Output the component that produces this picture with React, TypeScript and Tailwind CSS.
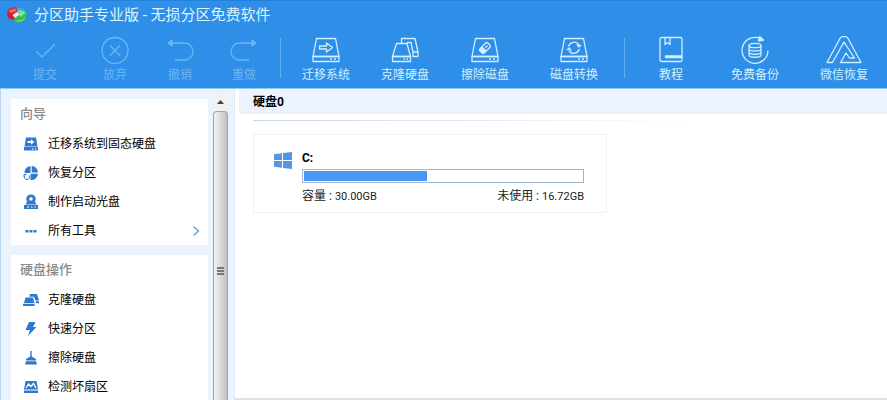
import type { ReactNode } from "react";

type Tool = {
  label: string;
  icon: ReactNode;
  className?: string;
};

function ToolIcon({ wide, children }: { wide?: boolean; children: ReactNode }) {
  return (
    <svg
      viewBox={wide ? "0 0 36 28" : "0 0 28 28"}
      className={wide ? "h-7 w-9" : "h-7 w-7"}
      fill="none"
      stroke="currentColor"
      strokeWidth="1.3"
      strokeLinejoin="round"
      aria-hidden="true"
    >
      {children}
    </svg>
  );
}

function DriveIcon({ children }: { children: ReactNode }) {
  return (
    <ToolIcon>
      <path d="M4.5 2.5h19L27 20.5H1z" />
      <path d="M1 20.5h26v5H1z" />
      <path d="M18 23h2M22 23h2" strokeWidth="1.6" />
      {children}
    </ToolIcon>
  );
}

const historyTools: Tool[] = [
  {
    label: "提交",
    icon: (
      <ToolIcon>
        <path d="m5 15 6 6L24 8" />
      </ToolIcon>
    ),
  },
  {
    label: "放弃",
    className: "ml-3.5",
    icon: (
      <ToolIcon>
        <circle cx="14" cy="14.5" r="13" />
        <path d="m9 9.5 10 10M19 9.5l-10 10" />
      </ToolIcon>
    ),
  },
  {
    label: "撤销",
    className: "ml-[9px]",
    icon: (
      <ToolIcon>
        <path d="M5 7h13.500a8.500 8.500 0 0 1 0 17H9" />
        <path d="M2 7l4-3v6z" fill="currentColor" />
      </ToolIcon>
    ),
  },
  {
    label: "重做",
    className: "ml-2",
    icon: (
      <ToolIcon>
        <path d="M23 7H9.500a8.500 8.500 0 0 0 0 17H19" />
        <path d="M26 7l-4-3v6z" fill="currentColor" />
      </ToolIcon>
    ),
  },
];

const diskTools: Tool[] = [
  {
    label: "迁移系统",
    icon: (
      <DriveIcon>
        <path d="M7.500 10h7V7l6 4.500-6 4.500v-3h-7z" />
      </DriveIcon>
    ),
  },
  {
    label: "克隆硬盘",
    className: "ml-[15px]",
    icon: (
      <ToolIcon>
        <path d="M5.500 7.500H16l3.500 13h-18z" />
        <path d="M1.500 20.500h18v5h-18z" />
        <path d="M12.500 23H14M15.500 23H17" strokeWidth="1.600" />
        <path d="M10.500 7V2.500h13.500l3 13.500v4.500h-5V16h5M22 16l-2-9.500h-4" />
      </ToolIcon>
    ),
  },
  {
    label: "擦除磁盘",
    className: "ml-4",
    icon: (
      <DriveIcon>
        <g transform="rotate(-45 14 12)">
          <rect x="8.500" y="9" width="11" height="6" rx="1.500" />
          <path d="M8.500 9.500h4v5h-4z" fill="currentColor" />
          <path d="M14.500 12h3" />
        </g>
      </DriveIcon>
    ),
  },
  {
    label: "磁盘转换",
    className: "ml-[25px]",
    icon: (
      <DriveIcon>
        <path d="M8.500 10.500a6 6 0 0 1 10.500-2M19.500 13a6 6 0 0 1-10.500 2" />
        <path d="M21.500 9.500l-3 2-2-3zM6.500 13.500l3-2 2 3z" fill="currentColor" strokeWidth="0.500" />
      </DriveIcon>
    ),
  },
];

const helpTools: Tool[] = [
  {
    label: "教程",
    icon: (
      <ToolIcon>
        <path d="M25 20V3q0-1.500-1.500-1.500h-19Q3 1.500 3 3v20.500Q3 25.500 5 25.500h18.500q1.500 0 1.500-1.500v-4H8.500v1.500H25" />
        <path d="M8 1.500v7l2.500-2 2.500 2v-7" />
      </ToolIcon>
    ),
  },
  {
    label: "免费备份",
    className: "ml-5",
    icon: (
      <ToolIcon>
        <path d="M27 14.500A13 13 0 1 1 18 2" />
        <path d="M18.500.500l4 3.500-5 1z" fill="currentColor" />
        <ellipse cx="14" cy="9.500" rx="6" ry="2.200" />
        <path d="M8 9.500v9.500c0 3 12 3 12 0V9.500M8 12.700c0 3 12 3 12 0M8 16c0 3 12 3 12 0" />
      </ToolIcon>
    ),
  },
  {
    label: "微信恢复",
    className: "ml-[25px]",
    icon: (
      <ToolIcon wide>
        <path d="M1 26.500 14.500 1.500 16 .700h4l1.500.800L35 26.500H14.500l5.500-9.500 3.500 5h5L18 6 6.500 26.500z" />
      </ToolIcon>
    ),
  },
];

function ToolGroup({ tools, itemClass, disabled }: { tools: Tool[]; itemClass: string; disabled?: boolean }) {
  return (
    <div className="flex">
      {tools.map((tool) => (
        <button
          key={tool.label}
          type="button"
          disabled={disabled}
          className={`flex shrink-0 flex-col items-center gap-[3px] text-xs leading-4 ${itemClass} ${tool.className ?? ""}`}
        >
          {tool.icon}
          <span className="whitespace-nowrap">{tool.label}</span>
        </button>
      ))}
    </div>
  );
}

function Divider() {
  return <div className="mt-0.5 h-10 w-px shrink-0 bg-[#62aff0]" />;
}

function Logo() {
  return (
    <svg viewBox="0 0 20 16" className="h-4 w-5" aria-hidden="true">
      <path d="M10 1C5-.5 0 2 0 6.500 0 10.500 3 13 7 12.500l3-3.500z" fill="#cf1f2b" />
      <path d="M1.500 5C3 1.500 7 1 9.500 2L9 4.500 4 6z" fill="#ee5f5a" />
      <path d="M10 1c4-1 8 1 9 4.500L13 9l-3-2z" fill="#35aee0" />
      <path d="M19 5c2 5-2 10.500-8 10.500-2.500 0-4.500-1-4.500-3L11 9z" fill="#35bf4c" />
      <path d="M11 4c3-1 6 0 7.500 2L13 10z" fill="#7fe39a" />
      <path d="M9 13.500c4 1 8-.5 9.500-4-.5 3.500-4.500 5.500-8 5z" fill="#a5ee7c" />
      <path d="M5.500 8 10 5l2.500 2.500L8 11z" fill="#e8f3f8" />
    </svg>
  );
}

function SideIcon({ children }: { children: ReactNode }) {
  return (
    <svg viewBox="0 0 16 16" className="h-4 w-4 shrink-0 text-[#2f78d0]" fill="currentColor" aria-hidden="true">
      {children}
    </svg>
  );
}

type SideItem = { label: string; icon: ReactNode; more?: boolean };

const wizardItems: SideItem[] = [
  {
    label: "迁移系统到固态硬盘",
    icon: (
      <SideIcon>
        <path d="M3 1.500h10l1.500 9h-13z" />
        <path d="M1 11h14v3.500H1z" />
        <path d="M4.500 5H8V3.200L11.500 6 8 8.800V7H4.500z" fill="#fff" />
        <path d="M9 12.500h1.500v1H9zM12 12.500h1.500v1H12z" fill="#fff" />
      </SideIcon>
    ),
  },
  {
    label: "恢复分区",
    icon: (
      <SideIcon>
        <path d="M7.500 1v7H1.500A6.500 6.500 0 0 1 7.500 1zM8.700 1A6.500 6.500 0 0 1 15 7.500H8.700zM15 8.700a6.500 6.500 0 0 1-7.500 6.300V8.700z" />
        <path d="M2 10.500a2.500 2.500 0 1 0 4 0M1 12v-2.500h2.500" fill="none" stroke="currentColor" />
      </SideIcon>
    ),
  },
  {
    label: "制作启动光盘",
    icon: (
      <SideIcon>
        <path d="M8 .5a4.500 4.500 0 0 1 4 7l1.500 3h-11L4 7.500a4.500 4.500 0 0 1 4-7z" />
        <circle cx="8" cy="5" r="1.800" fill="#fff" />
        <path d="M1 11h14v4H1z" />
        <path d="M4 12.500h2v1H4zM8 12.500h1.500v1H8zM11.500 12.500H13v1h-1.500z" fill="#fff" />
      </SideIcon>
    ),
  },
  {
    label: "所有工具",
    more: true,
    icon: (
      <SideIcon>
        <path d="M2.500 7h3v2.500h-3zM6.500 7h3v2.500h-3zM10.500 7h3v2.500h-3z" />
      </SideIcon>
    ),
  },
];

const diskItems: SideItem[] = [
  {
    label: "克隆硬盘",
    icon: (
      <SideIcon>
        <path d="M7 2h7l2 6.500h-3.500L11 4.800H6.300zM2.500 5.500H10l1.500 5.500H1zM0 11.700h11.500V14H0zM12.800 9.200H16v2h-3.200z" />
      </SideIcon>
    ),
  },
  {
    label: "快速分区",
    icon: (
      <SideIcon>
        <path d="M6 1h6.500L10 6h3.500L5 15l2-6H2.500z" />
      </SideIcon>
    ),
  },
  {
    label: "擦除硬盘",
    icon: (
      <SideIcon>
        <path d="M7.300 1h1.400v5.500L13 9v1.500H3V9l4.300-2.500z" />
        <path d="M3 11.200h10l1 3.300H2z" />
      </SideIcon>
    ),
  },
  {
    label: "检测坏扇区",
    icon: (
      <SideIcon>
        <path d="M2.500 2h11L15 10.500H1z" />
        <path d="M1 11.500h14V14H1z" />
        <path d="M3 9l2.500-4L8 7.500l2.500-3L13 9" fill="none" stroke="#fff" strokeWidth="1.300" />
      </SideIcon>
    ),
  },
];

function SidePanel({ title, items, className }: { title: string; items: SideItem[]; className?: string }) {
  return (
    <section className={`bg-white ${className ?? ""}`}>
      <h2 className="flex h-[30px] items-center pl-[9px] text-[13px] font-medium text-[#8b8b8b]">{title}</h2>
      <ul>
        {items.map((item) => (
          <li key={item.label}>
            <button type="button" className="flex h-[29px] w-full items-center pr-2 pl-3 text-xs text-black">
              {item.icon}
              <span className="ml-[9px]">{item.label}</span>
              {item.more && (
                <svg viewBox="0 0 8 12" className="ml-auto h-3 w-2" fill="none" stroke="#4aa0dc" strokeWidth="1.200" aria-hidden="true">
                  <path d="m1.500 1.500 5 4.500-5 4.500" />
                </svg>
              )}
            </button>
          </li>
        ))}
      </ul>
    </section>
  );
}

function Scrollbar() {
  return (
    <div className="flex w-[15px] shrink-0 flex-col bg-[#f1f1f4]">
      <button type="button" aria-label="向上滚动" className="flex h-[22px] items-center justify-center">
        <svg viewBox="0 0 7 4" className="mt-1 h-1 w-[7px]" aria-hidden="true">
          <path d="M3.500 0 7 4H0z" fill="#444" />
        </svg>
      </button>
      <div className="flex flex-1 items-center justify-center rounded-t-sm border-x border-t border-[#a3a3aa] bg-linear-to-r from-[#f3f3f5] to-[#bfbfc6] pt-[30px]">
        <div className="flex w-[7px] flex-col gap-px">
          <span className="h-0.5 bg-[#77777d]" />
          <span className="h-0.5 bg-[#77777d]" />
          <span className="h-0.5 bg-[#77777d]" />
        </div>
      </div>
    </div>
  );
}

function WindowsIcon() {
  return (
    <svg viewBox="0 0 18 17" className="mt-[17px] h-[17px] w-[18px] shrink-0" fill="#5596e0" aria-hidden="true">
      <path d="M0 2.300 8 1.200V8H0zM9 1 18 0v8H9zM0 9h8v6.800L0 14.700zM9 9h9v8l-9-1z" />
    </svg>
  );
}

function Volume({ name, total, free }: { name: string; total: number; free: number }) {
  const used = ((total - free) / total) * 100;

  return (
    <article className="mt-[13px] ml-[14px] flex h-[79px] max-w-[354px] border border-[#f0f1f3] pr-[22px] pl-5">
      <WindowsIcon />
      <div className="ml-2.5 flex-1 pt-[15px]">
        <h3 className="text-xs leading-4 font-bold text-black">{name}</h3>
        <div
          role="progressbar"
          aria-label={name}
          aria-valuenow={Math.round(used)}
          className="mt-[3px] h-3.5 border border-[#a3b7d4] bg-white p-px"
        >
          <div className="h-full bg-[#4797f5]" style={{ width: `${used}%` }} />
        </div>
        <div className="mt-[5px] flex justify-between text-xs leading-4 text-[#222]">
          <p>
            容量 : <span className="text-[11px]">{total.toFixed(2)}GB</span>
          </p>
          <p>
            未使用 : <span className="text-[11px]">{free.toFixed(2)}GB</span>
          </p>
        </div>
      </div>
    </article>
  );
}

export default function App() {
  return (
    <div className="flex h-screen flex-col overflow-hidden bg-white font-[Roboto,'Noto_Sans_CJK_SC',sans-serif]">
      <header className="h-[89px] shrink-0 border-t border-b border-t-[#2482dc] border-b-[#8accf5] bg-[#2e8ee8]">
        <div className="flex h-7 items-center gap-[7px] pl-[7px] text-[#dcf6ff]">
          <Logo />
          <h1 className="text-[15px] leading-5 whitespace-nowrap">分区助手专业版 - 无损分区免费软件</h1>
        </div>
        <nav className="flex pt-[7px] pl-[17px]" aria-label="工具栏">
          <div className="text-[#6db6f4]">
            <ToolGroup tools={historyTools} itemClass="w-14" disabled />
          </div>
          <div className="w-2 shrink-0" />
          <Divider />
          <div className="ml-[13px] text-[#d0f0ff]">
            <ToolGroup tools={diskTools} itemClass="w-16" />
          </div>
          <div className="w-[18px] shrink-0" />
          <Divider />
          <div className="ml-3.5 text-[#d0f0ff]">
            <ToolGroup tools={helpTools} itemClass="w-16" />
          </div>
        </nav>
      </header>

      <div className="flex min-h-0 flex-1">
        <aside className="flex w-[234px] shrink-0 border-l border-[#b6d6f3] bg-[#ebf3fd] pr-[6px] pl-2.5">
          <div className="flex flex-1 flex-col gap-2.5 overflow-hidden pt-2.5">
            <SidePanel title="向导" items={wizardItems} className="shrink-0" />
            <SidePanel title="硬盘操作" items={diskItems} className="flex-1" />
          </div>
          <div className="ml-[5px] flex">
            <Scrollbar />
          </div>
        </aside>

        <main className="flex min-w-0 flex-1 flex-col border-b-2 border-l border-b-[#dfe1ea] border-l-[#dde8f5] bg-white pl-1">
          <h2 className="flex h-[25px] items-center bg-[#ecf3fd] pl-[14px] text-xs font-bold text-black">硬盘0</h2>
          <div className="mt-1.5 ml-[14px] h-px shrink-0 bg-linear-to-r from-[#ccd5e3] to-white to-70%" />
          <Volume name="C:" total={30} free={16.72} />
        </main>
      </div>
    </div>
  );
}
